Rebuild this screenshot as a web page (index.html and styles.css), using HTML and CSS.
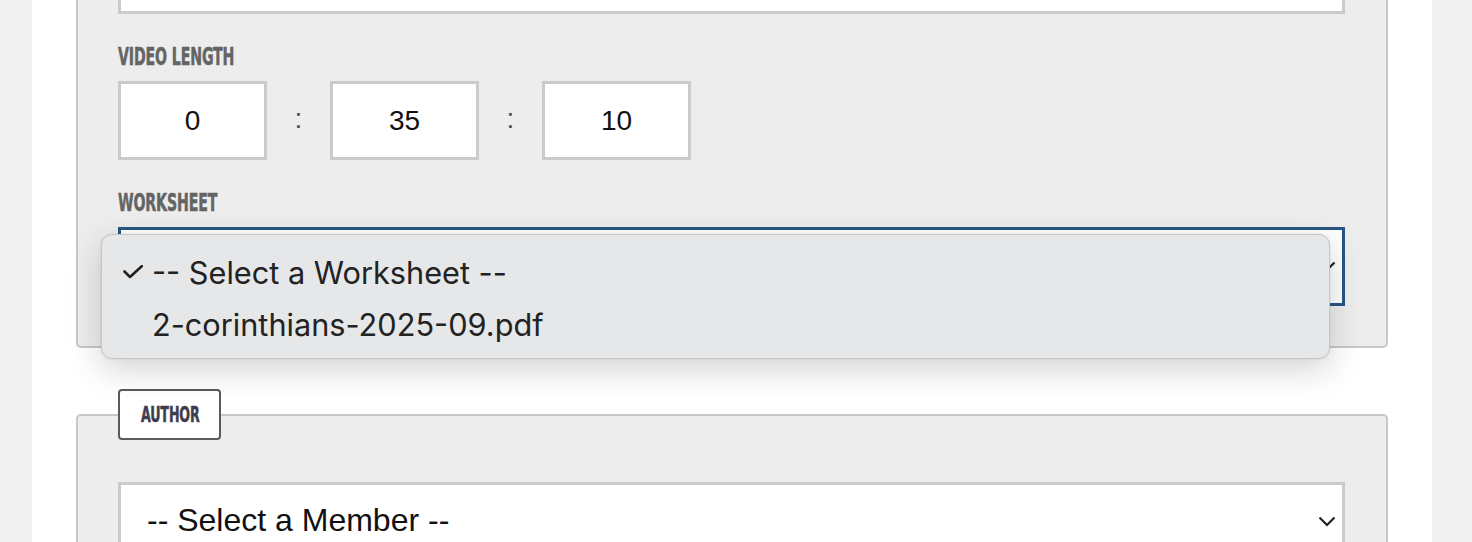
FILE: index.html
```html
<!DOCTYPE html>
<html lang="en">
<head>
<meta charset="utf-8">
<title>Video form</title>
<link rel="stylesheet" href="styles.css">
</head>
<body>
<div class="page">
  <fieldset class="panel panel-top">
    <div class="text-input"></div>

    <div class="field">
      <div class="label"><span>VIDEO LENGTH</span></div>
      <div class="time-row">
        <div class="time-box">0</div>
        <div class="colon">:</div>
        <div class="time-box">35</div>
        <div class="colon">:</div>
        <div class="time-box">10</div>
      </div>
    </div>

    <div class="field">
      <div class="label"><span>WORKSHEET</span></div>
      <div class="select-wrap">
        <div class="select select-focus">
          <span class="select-text"></span>
          <svg class="chev" width="18" height="11" viewBox="0 0 18 11"><path d="M1.5 1.5 L9 9 L16.5 1.5" fill="none" stroke="#222" stroke-width="2.2"/></svg>
        </div>
        <div class="popup">
          <div class="opt">
            <svg class="check" width="20" height="14" viewBox="0 0 20 14"><path d="M1.5 6.5 L7 12 L19 1" fill="none" stroke="#222" stroke-width="2.6" stroke-linecap="round" stroke-linejoin="round"/></svg>
            <span>-- Select a Worksheet --</span>
          </div>
          <div class="opt"><span class="noicon"></span><span>2-corinthians-2025-09.pdf</span></div>
        </div>
      </div>
    </div>
  </fieldset>

  <fieldset class="panel panel-author">
    <legend class="legend"><span>AUTHOR</span></legend>
    <div class="select">
      <span class="select-text">-- Select a Member --</span>
      <svg class="chev" width="18" height="11" viewBox="0 0 18 11"><path d="M1.5 1.5 L9 9 L16.5 1.5" fill="none" stroke="#222" stroke-width="2.2"/></svg>
    </div>
  </fieldset>
</div>
</body>
</html>
```

FILE: styles.css
```css
html, body {
  margin: 0;
  padding: 0;
}
body {
  background: #f0f0f0;
  height: 542px;
  overflow: hidden;
  font-family: "Liberation Sans", Arial, sans-serif;
}
.page {
  margin-left: 32px;
  width: 1400px;
  box-sizing: border-box;
  background: #fff;
  padding: 0 44px 200px 44px;
  margin-top: -107px;
}
.panel {
  margin: 0;
  border: 2px solid #c8c8c8;
  border-radius: 5px;
  background: #ededed;
  padding: 40px 41px 40px 40px;
  min-inline-size: 0;
}
.text-input {
  height: 79px;
  box-sizing: border-box;
  border: 3px solid #cbcbcb;
  background: #fff;
}
.field {
  margin-top: 31px;
}
.label {
  height: 24px;
  line-height: 24px;
  margin-bottom: 12px;
  white-space: nowrap;
}
.label span, .legend span {
  display: inline-block;
  font-family: "DejaVu Sans Condensed", "DejaVu Sans", sans-serif;
  font-weight: bold;
  font-size: 24px;
  color: #646464;
  transform: scaleX(0.655);
  transform-origin: left center;
  letter-spacing: -0.2px;
  -webkit-text-stroke: 0.5px currentColor;
}
.time-row {
  display: flex;
  align-items: center;
}
.time-box {
  width: 149px;
  height: 79px;
  box-sizing: border-box;
  border: 3px solid #cbcbcb;
  background: #fff;
  display: flex;
  align-items: center;
  justify-content: center;
  font-size: 28px;
  color: #111;
}
.colon {
  width: 63px;
  text-align: center;
  font-size: 28px;
  color: #4a4a5a;
  padding-bottom: 4px;
}
.select-wrap {
  position: relative;
}
.select {
  height: 79px;
  box-sizing: border-box;
  border: 3px solid #cbcbcb;
  background: #fff;
  display: flex;
  align-items: center;
  justify-content: space-between;
  padding: 0 6px 0 26px;
}
.select-focus {
  border-color: #285682;
}
.select-text {
  font-size: 32px;
  color: #111;
  margin-top: -2px;
}
.chev {
  display: block;
}
.popup {
  position: absolute;
  left: -17px;
  top: 7px;
  width: 1229px;
  box-sizing: border-box;
  height: 125px;
  background: #e6e7e9;
  border: 1px solid #c6c6c8;
  border-radius: 11px;
  box-shadow: 0 10px 34px rgba(0, 0, 0, 0.18), 0 0 3px rgba(0, 0, 0, 0.08);
  padding: 11px 0 0 21px;
}
.opt {
  display: flex;
  align-items: center;
  height: 52px;
  font-family: Inter, "Noto Sans", sans-serif;
  font-size: 30.7px;
  color: #222;
}
.check, .noicon {
  width: 20px;
  height: 14px;
  margin-right: 9px;
  flex: none;
  display: block;
}
.panel-author {
  margin-top: 41px;
  padding-top: 42px;
}
.legend {
  background: #fff;
  border: 2px solid #5a5a5a;
  border-radius: 4px;
  padding: 12px 20px 11px 21px;
  line-height: 24px;
  height: 51px;
  box-sizing: border-box;
  width: 103px;
  margin-left: 0;
  white-space: nowrap;
}
.legend span {
  font-size: 21px;
  color: #3d3d4c;
  transform: scaleX(0.67);
}
```
